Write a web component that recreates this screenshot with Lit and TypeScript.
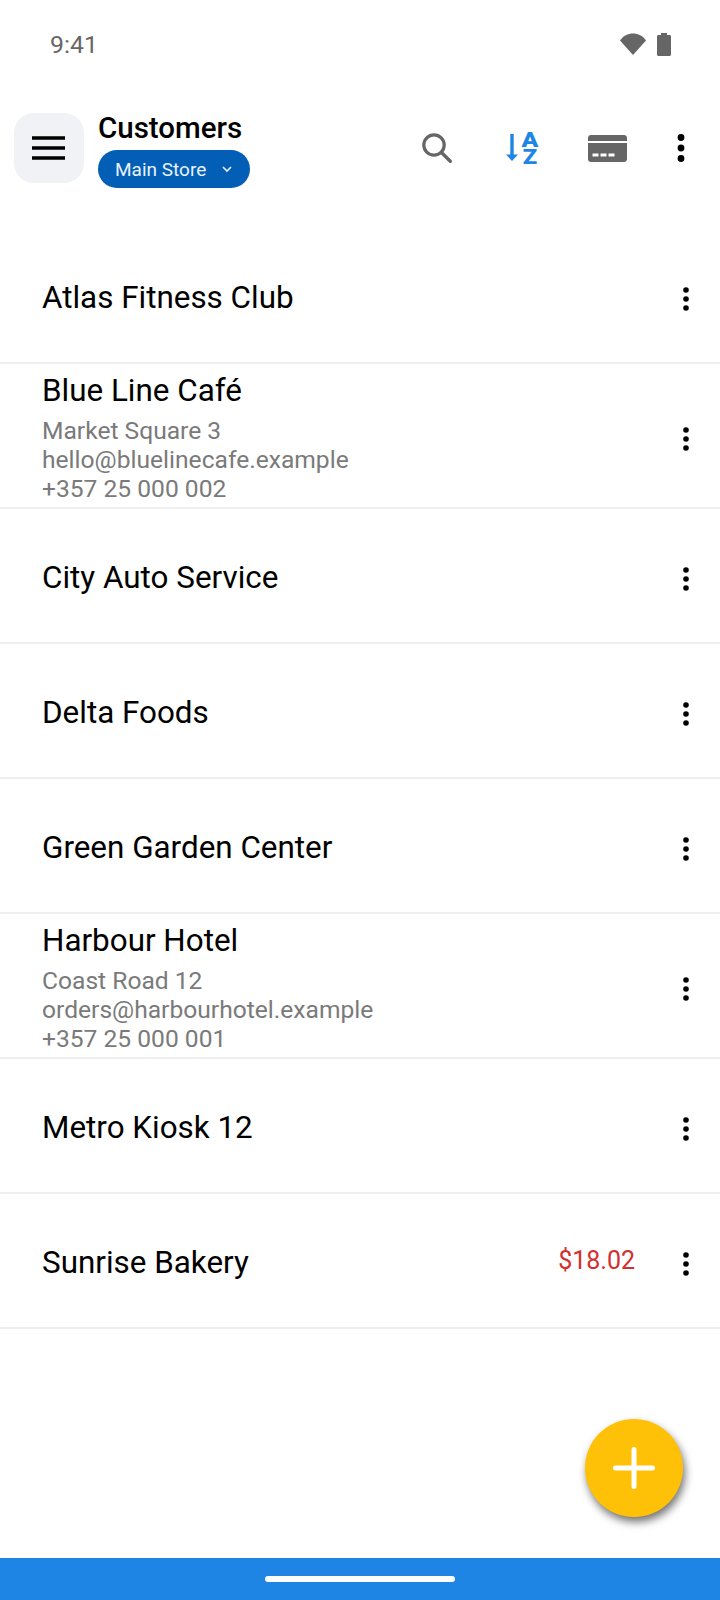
import { LitElement, html, css, svg } from "lit";
import { customElement } from "lit/decorators.js";

type Customer = {
  name: string;
  lines?: string[];
  balance?: string;
};

const customers: Customer[] = [
  { name: "Atlas Fitness Club" },
  {
    name: "Blue Line Café",
    lines: ["Market Square 3", "hello@bluelinecafe.example", "+357 25 000 002"],
  },
  { name: "City Auto Service" },
  { name: "Delta Foods" },
  { name: "Green Garden Center" },
  {
    name: "Harbour Hotel",
    lines: ["Coast Road 12", "orders@harbourhotel.example", "+357 25 000 001"],
  },
  { name: "Metro Kiosk 12" },
  { name: "Sunrise Bakery", balance: "$18.02" },
];

const topDots = html`<svg class="dots" viewBox="0 0 10 32" width="10" height="32">
  <circle cx="5" cy="5.500" r="3.400"></circle>
  <circle cx="5" cy="16" r="3.400"></circle>
  <circle cx="5" cy="26.500" r="3.400"></circle>
</svg>`;

const rowDots = html`<svg class="dots row-dots" viewBox="0 0 10 26" width="10" height="26">
  <circle cx="5" cy="4" r="2.800"></circle>
  <circle cx="5" cy="13" r="2.800"></circle>
  <circle cx="5" cy="22" r="2.800"></circle>
</svg>`;

@customElement("app-root")
class AppRoot extends LitElement {
  static styles = css`
    :host {
      display: block;
      position: relative;
      width: 720px;
      height: 1600px;
      background: #fff;
      font-family: Roboto, "Liberation Sans", sans-serif;
      color: #000;
      overflow: hidden;
    }
    * {
      box-sizing: border-box;
    }
    .page {
      display: flex;
      flex-direction: column;
      height: 100%;
    }
    .status {
      display: flex;
      align-items: center;
      justify-content: space-between;
      height: 88px;
      padding: 0 49px 0 50px;
      color: #666;
      font-size: 24.800px;
    }
    .status-icons {
      display: flex;
      align-items: center;
      gap: 11px;
    }
    .toolbar {
      display: flex;
      align-items: center;
      height: 96px;
      padding: 0 0 0 14px;
      margin-top: 12px;
    }
    .menu {
      display: flex;
      align-items: center;
      justify-content: center;
      width: 70px;
      height: 70px;
      border-radius: 20px;
      background: #f0f2f5;
    }
    .title {
      display: flex;
      flex-direction: column;
      align-items: flex-start;
      gap: 4px;
      padding-top: 2px;
      margin-left: 14px;
      flex: 1;
    }
    .title h1 {
      margin: 0;
      font-size: 29.500px;
      line-height: 36px;
      font-weight: 500;
    }
    .store {
      display: flex;
      align-items: center;
      height: 38px;
      padding: 0 18px 0 17px;
      gap: 16px;
      border-radius: 19px;
      background: #035eb5;
      color: #e8f3ff;
      font-size: 19px;
    }
    .actions {
      display: flex;
      align-items: center;
      padding-right: 34px;
    }
    .search {
      margin-right: 54px;
    }
    .sort {
      margin-right: 50px;
    }
    .card {
      margin-right: 49px;
    }
    .actions svg {
      display: block;
      overflow: visible;
    }
    .dots {
      fill: #000;
      display: block;
      flex: none;
    }
    .list {
      flex: 1;
      margin-top: 33px;
    }
    .row {
      display: flex;
      align-items: center;
      height: 135px;
      padding: 0 29px 0 42px;
      border-bottom: 2px solid #eeeff0;
    }
    .row.detailed {
      height: 145px;
    }
    .info {
      flex: 1;
      min-width: 0;
      padding-top: 4px;
    }
    .name {
      font-size: 31.400px;
      line-height: 38px;
    }
    .lines {
      margin-top: 6px;
      color: #7a7a7a;
      font-size: 24.600px;
      line-height: 29px;
    }
    .balance {
      margin-right: 46px;
      color: #d32f2f;
      font-size: 25px;
    }
    .row-dots {
      margin-top: 6px;
    }
    .fab {
      position: absolute;
      left: 585px;
      top: 1419px;
      display: flex;
      align-items: center;
      justify-content: center;
      width: 98px;
      height: 98px;
      border-radius: 50%;
      background: #ffc107;
      box-shadow: 2px 5px 8px rgba(0, 0, 0, 0.55);
    }
    .nav {
      display: flex;
      align-items: center;
      justify-content: center;
      height: 42px;
      background: #1f85e5;
    }
    .pill {
      width: 190px;
      height: 6px;
      border-radius: 3px;
      background: #fff;
    }
  `;

  render() {
    return html`
      <div class="page">
        <div class="status">
          <span>9:41</span>
          <div class="status-icons">
            <svg width="26" height="22" viewBox="0 0 26 22">
              <path fill="#666" d="M0 7.500C3 3 8 .5 13 .5s10 2.500 13 7L13 22z"></path>
            </svg>
            <svg width="14" height="23" viewBox="0 0 14 23">
              <path fill="#666" d="M4 0h6v2h2.500c.8 0 1.500.7 1.500 1.500v18c0 .8-.7 1.500-1.500 1.500h-11C.7 23 0 22.300 0 21.500v-18C0 2.700.7 2 1.500 2H4z"></path>
            </svg>
          </div>
        </div>
        <div class="toolbar">
          <div class="menu">
            <svg width="34" height="24" viewBox="0 0 34 24">
              <path fill="none" stroke="#000" stroke-width="3.400" d="M0 2h33M0 12h33M0 22h33"></path>
            </svg>
          </div>
          <div class="title">
            <h1>Customers</h1>
            <div class="store">
              <span>Main Store</span>
              <svg width="10" height="7" viewBox="0 0 10 7">
                <path fill="none" stroke="#e8f3ff" stroke-width="1.600" d="M1 1l4 4 4-4"></path>
              </svg>
            </div>
          </div>
          <div class="actions">
            <div class="search">
              <svg width="30" height="30" viewBox="0 0 30 30">
                <circle cx="12" cy="12" r="10.200" fill="none" stroke="#666" stroke-width="3.200"></circle>
                <path fill="none" stroke="#666" stroke-width="3.400" stroke-linecap="round" d="M19.500 19.500l8.800 8.800"></path>
              </svg>
            </div>
            <div class="sort">
              <svg width="32" height="32" viewBox="0 0 32 32">
                <path fill="#1f85e5" d="M4.300 2h3.400v20.500H12L6 29 0 22.500h4.300z"></path>
                ${svg`<text transform="translate(24 15) scale(1.180 1)" text-anchor="middle" font-family="Roboto, sans-serif" font-weight="900" font-size="21" fill="#1f85e5">A</text>`}
                ${svg`<text transform="translate(24 32) scale(1.180 1)" text-anchor="middle" font-family="Roboto, sans-serif" font-weight="900" font-size="20" fill="#1f85e5">Z</text>`}
              </svg>
            </div>
            <div class="card">
              <svg width="39" height="27" viewBox="0 0 39 27">
                <path fill="#666" fill-rule="evenodd" d="M3 0h33c1.700 0 3 1.300 3 3v3H0V3c0-1.700 1.300-3 3-3zM0 8h39v16c0 1.700-1.300 3-3 3H3c-1.700 0-3-1.300-3-3zM4.500 18.500v3h6v-3zm8 0v3h6v-3zm8 0v3h6v-3z"></path>
              </svg>
            </div>
            ${topDots}
          </div>
        </div>
        <div class="list">
          ${customers.map(
            (c) => html`
              <div class="row ${c.lines ? "detailed" : ""}">
                <div class="info">
                  <div class="name">${c.name}</div>
                  ${c.lines
                    ? html`<div class="lines">
                        ${c.lines.map((l) => html`<div>${l}</div>`)}
                      </div>`
                    : ""}
                </div>
                ${c.balance ? html`<div class="balance">${c.balance}</div>` : ""}
                ${rowDots}
              </div>
            `
          )}
        </div>
        <div class="nav"><div class="pill"></div></div>
      </div>
      <div class="fab">
        <svg width="42" height="42" viewBox="0 0 42 42">
          <path fill="none" stroke="#fff" stroke-width="5" stroke-linecap="round" d="M21 2.500v37M2.500 21h37"></path>
        </svg>
      </div>
    `;
  }
}

export { AppRoot };
